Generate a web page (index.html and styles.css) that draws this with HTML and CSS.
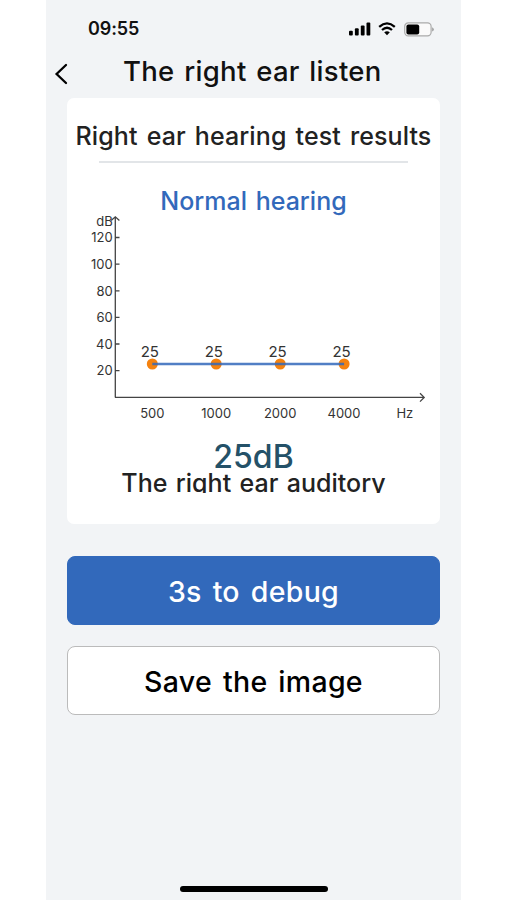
FILE: index.html
```
<!DOCTYPE html>
<html lang="en">
<head>
	<meta charset="utf-8">
	<title>The right ear listen</title>
	<link rel="stylesheet" href="styles.css">
</head>
<body>
	<div class="screen">
		<div class="status-bar">
			<span class="time">09:55</span>
			<svg class="signal" width="22" height="14" viewBox="0 0 22 14">
				<rect x="0" y="8.8" width="3.8" height="4.6" rx="1"/>
				<rect x="5.9" y="6.2" width="3.8" height="7.2" rx="1"/>
				<rect x="11.8" y="3.4" width="3.8" height="10" rx="1"/>
				<rect x="17.5" y="0.4" width="3.8" height="13" rx="1"/>
			</svg>
			<svg class="wifi" width="18" height="14" viewBox="0 0 18 14">
				<path d="M1.2 4.8 Q9 -2 16.8 4.8 M4 8 Q9 3.6 14 8"/>
				<path class="dot" d="M6.2 10.3 Q9 8 11.8 10.3 L9 13.2 Z"/>
			</svg>
			<svg class="battery" width="31" height="15" viewBox="0 0 31 15">
				<rect class="shell" x="0.7" y="0.9" width="26.4" height="13" rx="3.6"/>
				<rect class="level" x="2.4" y="2.6" width="12.8" height="9.8" rx="2"/>
				<path class="tip" d="M28.2 5.2 Q29.8 6 29.8 7.4 Q29.8 8.8 28.2 9.6 Z"/>
			</svg>
		</div>
		<div class="nav">
			<svg class="back" width="14" height="22" viewBox="0 0 14 22">
				<path d="M12 2 L2.6 11 L12 20"/>
			</svg>
			<h1 class="title">The right ear listen</h1>
		</div>
		<div class="card">
			<h2 class="heading">Right ear hearing test results</h2>
			<div class="divider"></div>
			<div class="level-name">Normal hearing</div>
			<svg class="chart" width="373" height="209" viewBox="67 215 373 209">
				<path class="axis" d="M115.3 397.5 V217 M111.2 220.4 L115.3 216.8 L119.4 220.4"/>
				<path class="axis" d="M115 397.4 H424 M420 393.2 L424.2 397.4 L420 401.6"/>
				<path class="axis" d="M115 237.5 h4.5 M115 264.2 h4.5 M115 290.8 h4.5 M115 317.4 h4.5 M115 344 h4.5 M115 370.6 h4.5"/>
				<g class="y-labels">
					<text x="112.7" y="226.4">dB</text>
					<text x="112.7" y="242.3">120</text>
					<text x="112.7" y="269">100</text>
					<text x="112.7" y="295.6">80</text>
					<text x="112.7" y="322.2">60</text>
					<text x="112.7" y="348.8">40</text>
					<text x="112.7" y="375.4">20</text>
				</g>
				<g class="x-labels">
					<text x="152.3" y="418.2">500</text>
					<text x="216.2" y="418.2">1000</text>
					<text x="280.2" y="418.2">2000</text>
					<text x="344" y="418.2">4000</text>
					<text x="404.8" y="418.2">Hz</text>
				</g>
				<g class="points">
					<circle cx="152.3" cy="364" r="5.5"/>
					<circle cx="216.2" cy="364" r="5.5"/>
					<circle cx="280.2" cy="364" r="5.5"/>
					<circle cx="344.1" cy="364" r="5.5"/>
				</g>
				<path class="line" d="M152.3 364 H344.1"/>
				<g class="values">
					<text x="149.8" y="357.2">25</text>
					<text x="213.8" y="357.2">25</text>
					<text x="277.6" y="357.2">25</text>
					<text x="341.6" y="357.2">25</text>
				</g>
			</svg>
			<div class="average">25dB</div>
			<div class="caption">The right ear auditory</div>
		</div>
		<button class="btn btn-primary">3s to debug</button>
		<button class="btn btn-plain">Save the image</button>
		<div class="home-bar"></div>
	</div>
</body>
</html>
```
FILE: styles.css
```
* {
	box-sizing: border-box;
}
body {
	margin: 0;
	height: 900px;
	overflow: hidden;
	background-color: #fff;
	font-family: Inter, "Liberation Sans", sans-serif;
	color: #111;
}
h1, h2 {
	margin: 0;
	font-weight: 500;
}
.screen {
	width: 415px;
	height: 900px;
	margin-left: 46px;
	padding: 0 21px;
	background-color: #f2f4f6;
	display: flex;
	flex-direction: column;
}
.status-bar {
	height: 48px;
	padding: 10px 5px 0 21px;
	display: flex;
	align-items: center;
}
.time {
	margin-right: auto;
	font-size: 18px;
	font-weight: 600;
	line-height: 20px;
	letter-spacing: -.1px;
}
.wifi {
	margin-left: 7px;
	fill: none;
	stroke: #000;
	stroke-width: 2.3;
}
.wifi .dot {
	fill: #000;
	stroke: none;
}
.battery {
	margin-left: 8px;
}
.shell {
	fill: #fafafa;
	stroke: #aaa;
	stroke-width: 1.2;
}
.tip {
	fill: #999;
}
.nav {
	height: 50px;
	margin-left: -13px;
	display: flex;
}
.back {
	margin-top: 15px;
	fill: none;
	stroke: #000;
	stroke-width: 2.3;
	stroke-linecap: round;
}
.title {
	margin-left: 55px;
	font-size: 27.5px;
	line-height: 46px;
	letter-spacing: .3px;
	word-spacing: 2px;
	white-space: nowrap;
}
.card {
	height: 426px;
	flex: none;
	border-radius: 7px;
	background-color: #fff;
	text-align: center;
	white-space: nowrap;
}
.heading {
	padding-top: 18px;
	font-size: 25px;
	line-height: 40px;
	letter-spacing: .1px;
	word-spacing: 2.3px;
	color: #222;
}
.divider {
	width: 309px;
	height: 2px;
	margin: 5px auto 0;
	background-color: #e2e5e8;
}
.level-name {
	height: 52px;
	padding-top: 18px;
	font-size: 25px;
	font-weight: 500;
	line-height: 40px;
	word-spacing: 2px;
	color: #3269bb;
}
.chart {
	display: block;
	overflow: visible;
	font-size: 13px;
	fill: #333;
}
.axis {
	fill: none;
	stroke: #444;
	stroke-width: 1.3;
}
.y-labels {
	text-anchor: end;
}
.x-labels, .values {
	text-anchor: middle;
}
.values {
	font-size: 15px;
}
.points {
	fill: #f5820f;
}
.line {
	stroke: #3269bb;
	stroke-opacity: .85;
	stroke-width: 2.3;
}
.average {
	margin-top: 19px;
	font-size: 32px;
	font-weight: 500;
	line-height: 28px;
	color: #245168;
}
/* the caption box is shorter than its line, descenders are cut */
.caption {
	height: 22px;
	overflow: hidden;
	font-size: 25px;
	font-weight: 500;
	line-height: 24px;
	word-spacing: 1.8px;
	color: #222;
}
.btn {
	height: 69px;
	flex: none;
	padding: 1px 0 0;
	border: 1px solid #bbb;
	border-radius: 8px;
	font-family: inherit;
	font-size: 28.5px;
	font-weight: 500;
	letter-spacing: .3px;
	word-spacing: 3px;
}
.btn-primary {
	margin-top: 32px;
	border-color: #3269bb;
	background-color: #3269bb;
	color: #fff;
}
.btn-plain {
	margin-top: 21px;
	background-color: #fff;
	color: #000;
}
.home-bar {
	width: 148px;
	height: 6px;
	margin: auto auto 8px;
	border-radius: 3px;
	background-color: #000;
}
```
